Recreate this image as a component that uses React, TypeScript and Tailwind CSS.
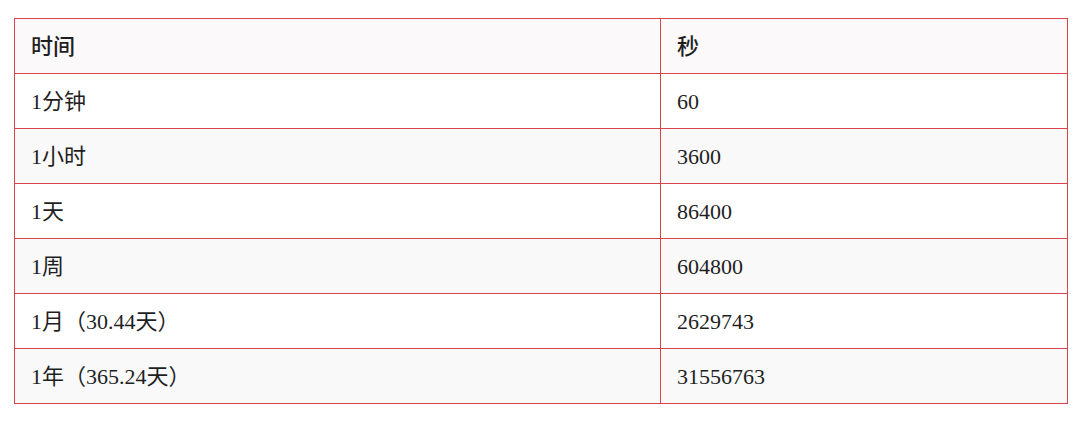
import React from "react";

const rows: [string, string][] = [
  ["1分钟", "60"],
  ["1小时", "3600"],
  ["1天", "86400"],
  ["1周", "604800"],
  ["1月（30.44天）", "2629743"],
  ["1年（365.24天）", "31556763"],
];

export default function App() {
  return (
    <div
      className="w-[1080px] h-[422px] bg-white pt-[18px] pl-[14px]"
      style={{ fontFamily: '"Liberation Serif", "Noto Sans CJK SC", serif' }}
    >
      <div className="w-[1054px] border border-[#d8444b] text-[#1f1f1f] text-[22px]">
        <div className="grid grid-cols-[646px_1fr] h-[54px] bg-[#fbf9fa]">
          <div className="flex items-center pl-[16px] border-r border-[#d8444b] font-medium">时间</div>
          <div className="flex items-center pl-[16px] font-medium">秒</div>
        </div>
        {rows.map(([a, b], i) => (
          <div
            key={a}
            className={
              "grid grid-cols-[646px_1fr] h-[55px] border-t border-[#d8444b] " +
              (i % 2 === 1 ? "bg-[#f9f9fa]" : "bg-white")
            }
          >
            <div className="flex items-center pl-[16px] border-r border-[#d8444b]">{a}</div>
            <div className="flex items-center pl-[16px]">{b}</div>
          </div>
        ))}
      </div>
    </div>
  );
}
